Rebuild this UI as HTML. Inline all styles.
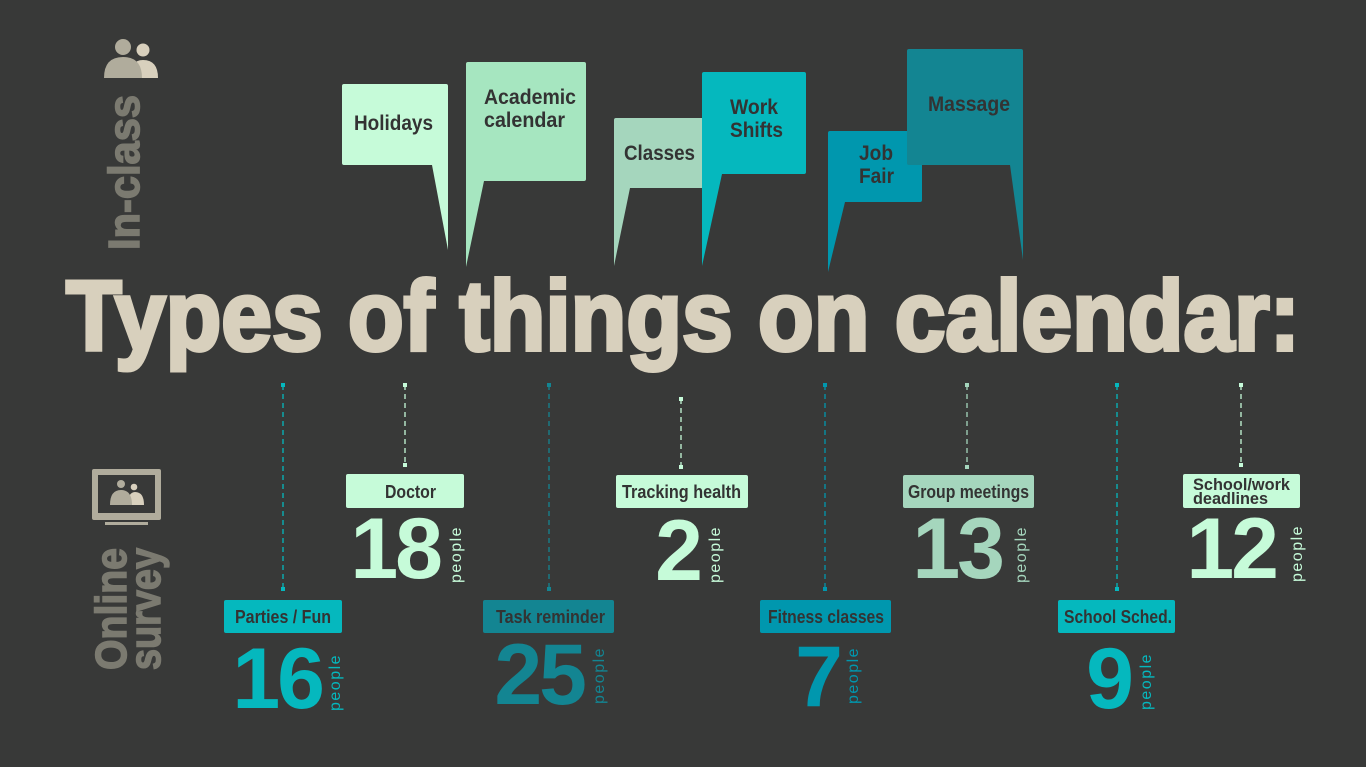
<!DOCTYPE html>
<html><head><meta charset="utf-8"><style>
html,body{margin:0;padding:0;background:#383938;}
svg{display:block}
.lb{font-family:"Liberation Sans",sans-serif;font-weight:bold;fill:#333;font-size:18px}
.num{font-family:"Liberation Sans",sans-serif;font-weight:bold;font-size:86px;letter-spacing:-3px}
.pp{font-family:"Liberation Sans",sans-serif;font-size:16px;letter-spacing:1.5px}
</style></head><body>
<svg width="1366" height="767" viewBox="0 0 1366 767" xmlns="http://www.w3.org/2000/svg">
<rect width="1366" height="767" fill="#383938"/>
<circle cx="123" cy="47" r="8" fill="#b0ac9c"/>
<circle cx="143" cy="50" r="6.5" fill="#d8d0bd"/>
<path d="M130 78 Q130 60 143 60 Q158 60 158 78 Z" fill="#d8d0bd"/>
<path d="M104 78 Q104 57 123 57 Q142 57 142 78 Z" fill="#b0ac9c"/>
<text transform="translate(139,250) rotate(-90)" font-family="Liberation Sans,sans-serif" font-weight="bold" font-size="44" fill="#7b7a70" stroke="#7b7a70" stroke-width="1.5" textLength="155" lengthAdjust="spacingAndGlyphs">In-class</text>
<rect x="92" y="469" width="69" height="51" rx="2" fill="#b0ac9c"/>
<rect x="98" y="475" width="57" height="38" fill="#383938"/>
<rect x="105" y="522" width="43" height="3" fill="#b0ac9c"/>
<circle cx="121" cy="484" r="4" fill="#b0ac9c"/><circle cx="134" cy="487" r="3.3" fill="#d8d0bd"/>
<path d="M128 505 Q128 492 135 492 Q144 492 144 505Z" fill="#d8d0bd"/>
<path d="M110 505 Q110 490 121 490 Q132 490 132 505Z" fill="#b0ac9c"/>
<text transform="translate(126,670) rotate(-90)" font-family="Liberation Sans,sans-serif" font-weight="bold" font-size="44" fill="#7b7a70" stroke="#7b7a70" stroke-width="1.5" textLength="122" lengthAdjust="spacingAndGlyphs">Online</text>
<text transform="translate(160,670) rotate(-90)" font-family="Liberation Sans,sans-serif" font-weight="bold" font-size="44" fill="#7b7a70" stroke="#7b7a70" stroke-width="1.5" textLength="122" lengthAdjust="spacingAndGlyphs">survey</text>

<path d="M344 84 H446 Q448 84 448 86 V250 L432 165 H344 Q342 165 342 163 V86 Q342 84 344 84Z" fill="#c6fbd9"/>
<text class="lb" x="354" y="130" style="font-size:21px" textLength="79" lengthAdjust="spacingAndGlyphs">Holidays</text>
<path d="M468 62 H584 Q586 62 586 64 V179 Q586 181 584 181 H484 L466 267 V64 Q466 62 468 62Z" fill="#a6e6c0"/>
<text class="lb" x="484" y="104" style="font-size:21px" textLength="92" lengthAdjust="spacingAndGlyphs">Academic</text>
<text class="lb" x="484" y="127" style="font-size:21px" textLength="81" lengthAdjust="spacingAndGlyphs">calendar</text>
<path d="M616 118 H706 V188 H630 L614 266 V120 Q614 118 616 118Z" fill="#a5d6bd"/>
<text class="lb" x="624" y="160" style="font-size:21px" textLength="71" lengthAdjust="spacingAndGlyphs">Classes</text>
<path d="M704 72 H804 Q806 72 806 74 V172 Q806 174 804 174 H722 L702 266 V74 Q702 72 704 72Z" fill="#05b8be"/>
<text class="lb" x="730" y="114" style="font-size:21px" textLength="48" lengthAdjust="spacingAndGlyphs">Work</text>
<text class="lb" x="730" y="137" style="font-size:21px" textLength="53" lengthAdjust="spacingAndGlyphs">Shifts</text>
<path d="M830 131 H922 V200 Q922 202 920 202 H845 L828 272 V133 Q828 131 830 131Z" fill="#0097ae"/>
<text class="lb" x="859" y="160" style="font-size:21px" textLength="34" lengthAdjust="spacingAndGlyphs">Job</text>
<text class="lb" x="859" y="183" style="font-size:21px" textLength="35" lengthAdjust="spacingAndGlyphs">Fair</text>
<path d="M909 49 H1021 Q1023 49 1023 51 V260 L1010 165 H909 Q907 165 907 163 V51 Q907 49 909 49Z" fill="#138592"/>
<text class="lb" x="928" y="111" style="font-size:21px" textLength="82" lengthAdjust="spacingAndGlyphs">Massage</text>

<text x="66" y="350" font-family="Liberation Sans,sans-serif" font-weight="bold" font-size="99" fill="#d8d0bd" stroke="#d8d0bd" stroke-width="4" textLength="1234" lengthAdjust="spacingAndGlyphs">Types of things on calendar:</text>

<g stroke-width="1.3" stroke-dasharray="5,4">
<line x1="283" y1="385" x2="283" y2="588" stroke="#05b8be"/>
<line x1="405" y1="385" x2="405" y2="465" stroke="#c6fbd9"/>
<line x1="549" y1="385" x2="549" y2="588" stroke="#138592"/>
<line x1="681" y1="399" x2="681" y2="467" stroke="#c6fbd9"/>
<line x1="825" y1="385" x2="825" y2="588" stroke="#0097ae"/>
<line x1="967" y1="385" x2="967" y2="467" stroke="#a5d6bd"/>
<line x1="1117" y1="385" x2="1117" y2="588" stroke="#05b8be"/>
<line x1="1241" y1="385" x2="1241" y2="465" stroke="#c6fbd9"/>
</g>
<g>
<rect x="281" y="383" width="4" height="4" fill="#05b8be"/><rect x="281" y="587" width="4" height="4" fill="#05b8be"/>
<rect x="403" y="383" width="4" height="4" fill="#c6fbd9"/><rect x="403" y="463" width="4" height="4" fill="#c6fbd9"/>
<rect x="547" y="383" width="4" height="4" fill="#138592"/><rect x="547" y="587" width="4" height="4" fill="#138592"/>
<rect x="679" y="397" width="4" height="4" fill="#c6fbd9"/><rect x="679" y="465" width="4" height="4" fill="#c6fbd9"/>
<rect x="823" y="383" width="4" height="4" fill="#0097ae"/><rect x="823" y="587" width="4" height="4" fill="#0097ae"/>
<rect x="965" y="383" width="4" height="4" fill="#a5d6bd"/><rect x="965" y="465" width="4" height="4" fill="#a5d6bd"/>
<rect x="1115" y="383" width="4" height="4" fill="#05b8be"/><rect x="1115" y="587" width="4" height="4" fill="#05b8be"/>
<rect x="1239" y="383" width="4" height="4" fill="#c6fbd9"/><rect x="1239" y="463" width="4" height="4" fill="#c6fbd9"/>
</g>

<rect x="346" y="474" width="118" height="34" rx="2" fill="#c6fbd9"/>
<text class="lb" x="385" y="498" textLength="51" lengthAdjust="spacingAndGlyphs">Doctor</text>
<text class="num" x="440" y="578" text-anchor="end" fill="#c6fbd9">18</text>
<text class="pp" transform="translate(461,583) rotate(-90)" fill="#c6fbd9">people</text>

<rect x="616" y="475" width="132" height="33" rx="2" fill="#c6fbd9"/>
<text class="lb" x="622" y="498" textLength="119" lengthAdjust="spacingAndGlyphs">Tracking health</text>
<text class="num" x="700" y="580" text-anchor="end" fill="#c6fbd9">2</text>
<text class="pp" transform="translate(720,583) rotate(-90)" fill="#c6fbd9">people</text>

<rect x="903" y="475" width="131" height="33" rx="2" fill="#a5d6bd"/>
<text class="lb" x="908" y="498" textLength="121" lengthAdjust="spacingAndGlyphs">Group meetings</text>
<text class="num" x="1002" y="578" text-anchor="end" fill="#a5d6bd">13</text>
<text class="pp" transform="translate(1026,583) rotate(-90)" fill="#a5d6bd">people</text>

<rect x="1183" y="474" width="117" height="34" rx="2" fill="#c6fbd9"/>
<text class="lb" x="1193" y="490" style="font-size:17px" textLength="97" lengthAdjust="spacingAndGlyphs">School/work</text>
<text class="lb" x="1193" y="504" style="font-size:17px" textLength="75" lengthAdjust="spacingAndGlyphs">deadlines</text>
<text class="num" x="1276" y="578" text-anchor="end" fill="#c6fbd9">12</text>
<text class="pp" transform="translate(1302,582) rotate(-90)" fill="#c6fbd9">people</text>

<rect x="224" y="600" width="118" height="33" rx="2" fill="#05b8be"/>
<text class="lb" x="235" y="623" textLength="96" lengthAdjust="spacingAndGlyphs">Parties / Fun</text>
<text class="num" x="322" y="708" text-anchor="end" fill="#05b8be">16</text>
<text class="pp" transform="translate(340,711) rotate(-90)" fill="#05b8be">people</text>

<rect x="483" y="600" width="131" height="33" rx="2" fill="#138592"/>
<text class="lb" x="496" y="623" textLength="109" lengthAdjust="spacingAndGlyphs">Task reminder</text>
<text class="num" x="584" y="704" text-anchor="end" fill="#138592">25</text>
<text class="pp" transform="translate(604,704) rotate(-90)" fill="#138592">people</text>

<rect x="760" y="600" width="131" height="33" rx="2" fill="#0097ae"/>
<text class="lb" x="768" y="623" textLength="116" lengthAdjust="spacingAndGlyphs">Fitness classes</text>
<text class="num" x="840" y="706" text-anchor="end" fill="#0097ae">7</text>
<text class="pp" transform="translate(858,704) rotate(-90)" fill="#0097ae">people</text>

<rect x="1058" y="600" width="117" height="33" rx="2" fill="#05b8be"/>
<text class="lb" x="1064" y="623" textLength="108" lengthAdjust="spacingAndGlyphs">School Sched.</text>
<text class="num" x="1131" y="708" text-anchor="end" fill="#05b8be">9</text>
<text class="pp" transform="translate(1151,710) rotate(-90)" fill="#05b8be">people</text>
</svg>
</body></html>
